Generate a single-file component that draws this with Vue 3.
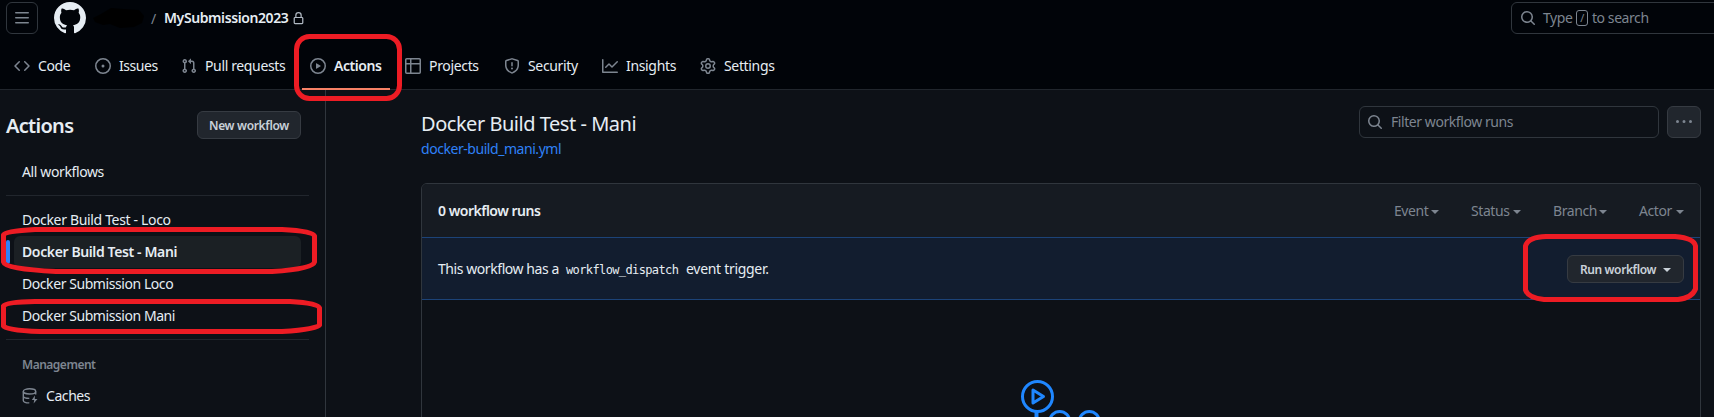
<script setup>
const tabs = [
  { name: 'Code', icon: 'code' },
  { name: 'Issues', icon: 'issue' },
  { name: 'Pull requests', icon: 'pull' },
  { name: 'Actions', icon: 'play', active: true },
  { name: 'Projects', icon: 'table' },
  { name: 'Security', icon: 'shield' },
  { name: 'Insights', icon: 'graph' },
  { name: 'Settings', icon: 'gear' }
]
const icons = {
  code: 'm11.28 3.22 4.25 4.25a.75.75 0 0 1 0 1.06l-4.25 4.25a.749.749 0 0 1-1.275-.326.749.749 0 0 1 .215-.734L13.94 8l-3.72-3.72a.749.749 0 0 1 .326-1.275.749.749 0 0 1 .734.215Zm-6.56 0a.751.751 0 0 1 1.042.018.751.751 0 0 1 .018 1.042L2.06 8l3.72 3.72a.749.749 0 0 1-.326 1.275.749.749 0 0 1-.734-.215L.47 8.53a.75.75 0 0 1 0-1.06Z',
  issue: 'M8 9.5a1.5 1.5 0 1 0 0-3 1.5 1.5 0 0 0 0 3Z M8 0a8 8 0 1 1 0 16A8 8 0 0 1 8 0ZM1.5 8a6.5 6.5 0 1 0 13 0 6.5 6.5 0 0 0-13 0Z',
  pull: 'M1.5 3.25a2.25 2.25 0 1 1 3 2.122v5.256a2.251 2.251 0 1 1-1.5 0V5.372A2.25 2.25 0 0 1 1.5 3.25Zm5.677-.177L9.573.677A.25.25 0 0 1 10 .854V2.5h1A2.5 2.5 0 0 1 13.5 5v5.628a2.251 2.251 0 1 1-1.5 0V5a1 1 0 0 0-1-1h-1v1.646a.25.25 0 0 1-.427.177L7.177 3.427a.25.25 0 0 1 0-.354ZM3.75 2.5a.75.75 0 1 0 0 1.5.75.75 0 0 0 0-1.5Zm0 9.5a.75.75 0 1 0 0 1.5.75.75 0 0 0 0-1.5Zm8.25.75a.75.75 0 1 0 1.5 0 .75.75 0 0 0-1.5 0Z',
  play: 'M8 0a8 8 0 1 1 0 16A8 8 0 0 1 8 0ZM1.5 8a6.5 6.5 0 1 0 13 0 6.5 6.5 0 0 0-13 0Zm4.879-2.773 4.264 2.559a.25.25 0 0 1 0 .428l-4.264 2.559A.25.25 0 0 1 6 10.559V5.442a.25.25 0 0 1 .379-.215Z',
  table: 'M0 1.75C0 .784.784 0 1.75 0h12.5C15.216 0 16 .784 16 1.75v12.5A1.75 1.75 0 0 1 14.25 16H1.75A1.75 1.75 0 0 1 0 14.25ZM6.5 6.5v8h7.75a.25.25 0 0 0 .25-.25V6.5Zm8-1.5V1.75a.25.25 0 0 0-.25-.25H6.5V5Zm-13 1.5v7.75c0 .138.112.25.25.25H5v-8ZM5 5V1.5H1.75a.25.25 0 0 0-.25.25V5Z',
  shield: 'M7.467.133a1.748 1.748 0 0 1 1.066 0l5.25 1.68A1.75 1.75 0 0 1 15 3.48V7c0 1.566-.32 3.182-1.303 4.682-.983 1.498-2.585 2.813-5.032 3.855a1.697 1.697 0 0 1-1.33 0c-2.447-1.042-4.049-2.357-5.032-3.855C1.32 10.182 1 8.566 1 7V3.48a1.75 1.75 0 0 1 1.217-1.667Zm.61 1.429a.25.25 0 0 0-.153 0l-5.25 1.68a.25.25 0 0 0-.174.238V7c0 1.358.275 2.666 1.057 3.86.784 1.194 2.121 2.34 4.366 3.297a.196.196 0 0 0 .154 0c2.245-.956 3.582-2.104 4.366-3.298C13.225 9.666 13.5 8.36 13.5 7V3.48a.251.251 0 0 0-.174-.237l-5.25-1.68ZM8.75 4.75v3a.75.75 0 0 1-1.5 0v-3a.75.75 0 0 1 1.5 0ZM9 10.5a1 1 0 1 1-2 0 1 1 0 0 1 2 0Z',
  graph: 'M1.5 1.75V13.5h13.75a.75.75 0 0 1 0 1.5H.75a.75.75 0 0 1-.75-.75V1.75a.75.75 0 0 1 1.5 0Zm14.28 2.53-5.25 5.25a.75.75 0 0 1-1.06 0L7 7.06 4.28 9.78a.751.751 0 0 1-1.042-.018.751.751 0 0 1-.018-1.042l3.25-3.25a.75.75 0 0 1 1.06 0L10 7.94l4.72-4.72a.751.751 0 0 1 1.042.018.751.751 0 0 1 .018 1.042Z',
  gear: 'M8 0a8.2 8.2 0 0 1 .701.031C9.444.095 9.99.645 10.16 1.29l.288 1.107c.018.066.079.158.212.224.231.114.454.243.668.386.123.082.233.09.299.071l1.103-.303c.644-.176 1.392.021 1.82.63.27.385.506.792.704 1.218.315.675.111 1.422-.364 1.891l-.814.806c-.049.048-.098.147-.088.294.016.257.016.515 0 .772-.01.147.038.246.088.294l.814.806c.475.469.679 1.216.364 1.891a7.977 7.977 0 0 1-.704 1.217c-.428.61-1.176.807-1.82.63l-1.102-.302c-.067-.019-.177-.011-.3.071a5.909 5.909 0 0 1-.668.386c-.133.066-.194.158-.211.224l-.29 1.106c-.168.646-.715 1.196-1.458 1.26a8.006 8.006 0 0 1-1.402 0c-.743-.064-1.289-.614-1.458-1.26l-.289-1.106c-.018-.066-.079-.158-.212-.224a5.738 5.738 0 0 1-.668-.386c-.123-.082-.233-.09-.299-.071l-1.103.303c-.644.176-1.392-.021-1.82-.63a8.12 8.12 0 0 1-.704-1.218c-.315-.675-.111-1.422.363-1.891l.815-.806c.05-.048.098-.147.088-.294a6.214 6.214 0 0 1 0-.772c.01-.147-.038-.246-.088-.294l-.815-.806C.635 6.045.431 5.298.746 4.623a7.92 7.92 0 0 1 .704-1.217c.428-.61 1.176-.807 1.82-.63l1.102.302c.067.019.177.011.3-.071.214-.143.437-.272.668-.386.133-.066.194-.158.211-.224l.29-1.106C6.009.645 6.556.095 7.299.03 7.53.01 7.764 0 8 0Zm-.571 1.525c-.036.003-.108.036-.137.146l-.289 1.105c-.147.561-.549.967-.998 1.189-.173.086-.34.183-.5.29-.417.278-.97.423-1.529.27l-1.103-.303c-.109-.03-.175.016-.195.045-.22.312-.412.644-.573.99-.014.031-.021.11.059.19l.815.806c.411.406.562.957.53 1.456a4.709 4.709 0 0 0 0 .582c.032.499-.119 1.05-.53 1.456l-.815.806c-.081.08-.073.159-.059.19.162.346.353.677.573.989.02.03.085.076.195.046l1.102-.303c.56-.153 1.113-.008 1.53.27.161.107.328.204.501.29.447.222.85.629.997 1.189l.289 1.105c.029.109.101.143.137.146a6.6 6.6 0 0 0 1.142 0c.036-.003.108-.036.137-.146l.289-1.105c.147-.561.549-.967.998-1.189.173-.086.34-.183.5-.29.417-.278.97-.423 1.529-.27l1.103.303c.109.029.175-.016.195-.045.22-.313.411-.644.573-.99.014-.031.021-.11-.059-.19l-.815-.806c-.411-.406-.562-.957-.53-1.456a4.709 4.709 0 0 0 0-.582c-.032-.499.119-1.05.53-1.456l.815-.806c.081-.08.073-.159.059-.19a6.464 6.464 0 0 0-.573-.989c-.02-.03-.085-.076-.195-.046l-1.102.303c-.56.153-1.113.008-1.53-.27a4.44 4.44 0 0 0-.501-.29c-.447-.222-.85-.629-.997-1.189l-.289-1.105c-.029-.11-.101-.143-.137-.146a6.6 6.6 0 0 0-1.142 0ZM11 8a3 3 0 1 1-6 0 3 3 0 0 1 6 0ZM9.5 8a1.5 1.5 0 1 0-3.001.001A1.5 1.5 0 0 0 9.5 8Z',
  search: 'M10.68 11.74a6 6 0 0 1-7.922-8.982 6 6 0 0 1 8.982 7.922l3.04 3.04a.749.749 0 0 1-.326 1.275.749.749 0 0 1-.734-.215ZM11.5 7a4.499 4.499 0 1 0-8.997 0A4.499 4.499 0 0 0 11.5 7Z',
  lock: 'M4 4a4 4 0 0 1 8 0v2h.25c.966 0 1.75.784 1.75 1.75v5.5A1.75 1.75 0 0 1 12.25 15h-8.5A1.75 1.75 0 0 1 2 13.25v-5.5C2 6.784 2.784 6 3.75 6H4Zm8.25 3.5h-8.5a.25.25 0 0 0-.25.25v5.5c0 .138.112.25.25.25h8.5a.25.25 0 0 0 .25-.25v-5.5a.25.25 0 0 0-.25-.25ZM10.5 6V4a2.5 2.5 0 1 0-5 0v2Z',
  menu: 'M1 2.75A.75.75 0 0 1 1.75 2h12.5a.75.75 0 0 1 0 1.5H1.75A.75.75 0 0 1 1 2.75Zm0 5A.75.75 0 0 1 1.75 7h12.5a.75.75 0 0 1 0 1.5H1.75A.75.75 0 0 1 1 7.75ZM1.75 12h12.5a.75.75 0 0 1 0 1.5H1.75a.75.75 0 0 1 0-1.5Z',
  dots: 'M8 9a1.5 1.5 0 1 0 0-3 1.5 1.5 0 0 0 0 3ZM1.5 9a1.5 1.5 0 1 0 0-3 1.5 1.5 0 0 0 0 3Zm13 0a1.5 1.5 0 1 0 0-3 1.5 1.5 0 0 0 0 3Z',
  mark: 'M8 0c4.42 0 8 3.58 8 8a8.013 8.013 0 0 1-5.45 7.59c-.4.08-.55-.17-.55-.38 0-.27.01-1.13.01-2.2 0-.75-.25-1.23-.54-1.48 1.78-.2 3.65-.88 3.65-3.95 0-.88-.31-1.59-.82-2.15.08-.2.36-1.02-.08-2.12 0 0-.67-.22-2.2.82-.64-.18-1.32-.27-2-.27-.68 0-1.36.09-2 .27-1.53-1.03-2.2-.82-2.2-.82-.44 1.1-.16 1.92-.08 2.12-.51.56-.82 1.28-.82 2.15 0 3.06 1.86 3.75 3.64 3.95-.23.2-.44.55-.51 1.07-.46.21-1.61.55-2.33-.66-.15-.24-.6-.83-1.23-.82-.67.01-.27.38.01.53.34.19.73.9.82 1.13.16.45.68 1.31 2.69.94 0 .67.01 1.3.01 1.49 0 .21-.15.45-.55.38A7.995 7.995 0 0 1 0 8c0-4.42 3.58-8 8-8Z'
}
const workflows = [
  { name: 'Docker Build Test - Loco', cls: 'w-a' },
  { name: 'Docker Build Test - Mani', cls: 'w-b', active: true },
  { name: 'Docker Submission Loco', cls: 'w-c' },
  { name: 'Docker Submission Mani', cls: 'w-d' }
]
const filters = ['Event', 'Status', 'Branch', 'Actor']
</script>

<template>
  <div class="page">
    <header class="header">
      <div class="topbar">
        <button class="menu"><svg class="ic" viewBox="0 0 16 16"><path :d="icons.menu" /></svg></button>
        <svg class="mark" viewBox="0 0 16 16"><path :d="icons.mark" /></svg>
        <svg class="redacted" viewBox="0 0 52 24"><path d="M0 12 8 8l5-3 5-3 12 1 16 1 5 6-2 7-8 4-14 1-10-4-7 1-8-3Z" /></svg>
        <span class="slash">/</span>
        <b class="repo">MySubmission2023</b>
        <svg class="lock" viewBox="0 0 16 16"><path :d="icons.lock" /></svg>
        <div class="search">
          <svg class="ic" viewBox="0 0 16 16"><path :d="icons.search" /></svg>
          <span class="type">Type</span><kbd>/</kbd><span>to search</span>
        </div>
      </div>
      <nav class="tabs">
        <a v-for="t in tabs" :key="t.name" class="tab" :class="[t.icon, { active: t.active }]">
          <svg class="ic" viewBox="0 0 16 16"><path :d="icons[t.icon]" fill-rule="evenodd" /></svg>
          <span>{{ t.name }}</span>
        </a>
      </nav>
    </header>

    <div class="body">
      <aside class="side">
        <div class="side-head">
          <h2>Actions</h2>
          <button class="btn new">New workflow</button>
        </div>
        <a class="item all">All workflows</a>
        <hr class="hr-a">
        <a v-for="w in workflows" :key="w.name" class="item" :class="[w.cls, { active: w.active }]">{{ w.name }}</a>
        <hr class="hr-b">
        <div class="mgmt">Management</div>
        <a class="item caches">
          <svg class="db" viewBox="0 0 16 16">
            <ellipse cx="7.5" cy="3.4" rx="6.2" ry="2.6" />
            <path d="M1.3 3.4v9c0 1.2 2.2 2.4 6 2.500M1.3 8c0 1.3 2.4 2.4 6 2.400M13.700 3.400v3" />
            <path class="bolt" d="M12.900 7.600 9.800 12h2.400l-.6 3.600L15.500 11h-2.700Z" />
          </svg>
          <span>Caches</span>
        </a>
      </aside>

      <main class="main">
        <div class="title-row">
          <div class="titles">
            <h1>Docker Build Test - Mani</h1>
            <a class="file">docker-build_mani.yml</a>
          </div>
          <div class="filter">
            <svg class="ic" viewBox="0 0 16 16"><path :d="icons.search" /></svg>
            <span>Filter workflow runs</span>
          </div>
          <button class="btn more"><svg class="ic" viewBox="0 0 16 16"><path :d="icons.dots" /></svg></button>
        </div>
        <section class="card">
          <div class="card-head">
            <b>0 workflow runs</b>
            <div class="filters">
              <span v-for="f in filters" :key="f" :class="f.toLowerCase()">{{ f }}<i class="caret"></i></span>
            </div>
          </div>
          <div class="dispatch">
            <p><span class="p-a">This workflow has a</span><code>workflow_dispatch</code><span class="p-b">event trigger.</span></p>
            <button class="btn run">Run workflow<i class="caret"></i></button>
          </div>
          <div class="empty">
            <svg class="art" viewBox="0 0 90 38">
              <circle cx="17.5" cy="16.5" r="15" />
              <path d="M13 10v13l10.500-6.500Z" stroke-linejoin="round" />
              <path d="M16.500 32v6" stroke-width="4" />
              <circle cx="39.700" cy="41.500" r="10" />
              <circle cx="69.300" cy="41.500" r="10" />
            </svg>
          </div>
        </section>
      </main>
    </div>

    <svg class="marks" viewBox="0 0 1714 417">
      <rect x="296.500" y="36.500" width="103" height="62" rx="13" />
      <path d="M3.500 235Q5 231 35 229.500H282Q313 231 314.500 236V262Q313 269 272 271.500H56Q5 269 3.500 262Z" />
      <path d="M3.500 306Q6 302 35 301.500H290Q318 303 319.500 308V325Q318 329 282 331.500H40Q5 330 3.500 326Z" />
      <path d="M1525.500 246Q1528 237 1546 236.500H1675Q1694 238 1695.500 246V289Q1692 298 1678 299.500H1544Q1528 298 1525.500 290Z" />
    </svg>
  </div>
</template>

<style>
html, body { background: #0d1117; overflow: hidden; }
</style>

<style scoped>
* { box-sizing: border-box; }
.page { position: relative; width: 1714px; height: 417px; overflow: hidden; background: #0d1117; color: #e6edf3; font: 14px/20px "Noto Sans", "Open Sans", sans-serif; letter-spacing: -.43px; white-space: nowrap; }
svg { display: block; flex: none; }
button { font: inherit; letter-spacing: inherit; padding: 0; }
.ic { width: 16px; height: 16px; fill: #7d8590; }
.header { height: 90px; background: #010409; border-bottom: 1px solid #21262d; }
.topbar { display: flex; align-items: center; height: 36px; padding: 0 0 0 6px; }
.menu { display: grid; place-items: center; width: 32px; height: 32px; border: 1px solid #30363d; border-radius: 6px; background: none; }
.mark { width: 32px; height: 32px; margin-left: 16px; fill: #e6edf3; }
.redacted { width: 52px; height: 24px; margin-left: 7px; fill: #000; }
.slash { width: 6px; margin-left: 6px; padding-top: 1px; color: #7d8590; }
.repo { width: 124px; margin-left: 7px; font-weight: 600; letter-spacing: -.4px; }
.lock { width: 13px; height: 13px; margin-left: 4px; fill: #b1bac4; }
.search { display: flex; align-items: center; width: 230px; height: 32px; margin-left: auto; margin-right: -27px; padding-left: 8px; border: 1px solid #30363d; border-radius: 6px; color: #7d8590; }
.type { margin-left: 7px; width: 33px; }
kbd { display: grid; place-items: center; width: 12px; height: 16px; margin-right: 4px; border: 1px solid #7d8590; border-radius: 3px; font: 11px/12px "Noto Sans", sans-serif; }
.tabs { display: flex; gap: 8px; height: 54px; padding-left: 6px; }
.tab { display: flex; align-items: center; gap: 8px; height: 54px; padding: 8px 0 0 8px; border-bottom: 2px solid transparent; }
.tab.code { width: 73px; } .tab.issue { width: 78px; } .tab.pull { width: 121px; letter-spacing: -.36px; }
.tab.play { width: 88px; font-weight: 600; } .tab.active { border-color: #f78166; }
.tab.table { width: 91px; margin-left: -1px; } .tab.shield { width: 90px; } .tab.graph { width: 90px; }
.tab.table, .tab.shield, .tab.graph, .tab.gear { letter-spacing: -.34px; }
.body { display: flex; height: 327px; }
.side { width: 326px; padding: 21px 0 0 6px; border-right: 1px solid #30363d; }
.side-head { display: flex; align-items: center; justify-content: space-between; height: 28px; margin-right: 24px; }
h2 { margin: 2px 0 0; font-size: 20px; line-height: 28px; font-weight: 600; letter-spacing: -.7px; }
.btn { display: flex; align-items: center; justify-content: center; border: 1px solid #363b42; border-radius: 6px; background: #21262d; color: #c9d1d9; font-size: 12px; font-weight: 600; }
.new { width: 104px; height: 28px; padding-top: 2px; letter-spacing: -.33px; }
.item { position: relative; display: flex; align-items: center; height: 32px; width: 287px; margin-left: 8px; padding-left: 8px; border-radius: 6px; }
.all { margin-top: 17px; letter-spacing: -.38px; }
.w-a { letter-spacing: -.33px; }
.w-b { letter-spacing: -.38px; }
hr { width: 303px; height: 1px; margin: 0; border: 0; background: #21262d; }
.hr-a { margin: 7px 0 8px; } .hr-b { margin: 7px 0 15px; }
.item.active { background: #1b2024; font-weight: 600; }
.item.active::before { content: ""; position: absolute; left: -8px; top: 4px; width: 4px; height: 24px; border-radius: 6px; background: #2f81f7; }
.mgmt { margin-left: 16px; font-size: 12px; font-weight: 600; color: #7d8590; line-height: 20px; letter-spacing: -.5px; }
.caches { gap: 8px; margin-top: 5px; }
.db { width: 16px; height: 16px; fill: none; stroke: #7d8590; stroke-width: 1.4; }
.bolt { fill: #7d8590; stroke: none; }
.main { flex: 1; padding: 16px 13px 0 95px; }
.title-row { display: flex; height: 77px; }
.titles { flex: 1; }
h1 { margin: 3px 0 0; font-size: 20px; line-height: 30px; font-weight: 400; letter-spacing: -.47px; }
.file { display: block; color: #2f81f7; line-height: 20px; letter-spacing: -.45px; }
.filter { display: flex; align-items: center; width: 300px; height: 32px; margin-right: 8px; padding-left: 7px; gap: 8px; border: 1px solid #30363d; border-radius: 6px; color: #7d8590; }
.more { width: 34px; height: 32px; }
.card { height: 260px; border: 1px solid #30363d; border-radius: 6px 6px 0 0; overflow: hidden; }
.card-head { display: flex; justify-content: space-between; align-items: center; height: 53px; padding: 0 16px; background: #161b22; }
.card-head b { font-weight: 600; letter-spacing: -.5px; }
.filters { display: flex; color: #7d8590; }
.filters span { display: flex; align-items: center; justify-content: space-between; }
.event { width: 45px; } .status { width: 50px; margin-left: 32px; } .branch { width: 54px; margin-left: 32px; } .actor { width: 45px; margin-left: 32px; }
.caret { width: 0; height: 0; margin-top: 2px; border: 4px solid transparent; border-top-color: currentColor; border-bottom: 0; }
.dispatch { display: flex; justify-content: space-between; align-items: center; height: 63px; padding: 0 16px; background: #121d2f; border: solid #1c4378; border-width: 1px 0; }
.dispatch p { display: flex; align-items: center; margin: 1px 0 0; }
.p-a { width: 121px; }
code { width: 127px; padding: 1px 0 0 7px; font: 12px/18px "DejaVu Sans Mono", monospace; letter-spacing: -.62px; }
.p-b { letter-spacing: -.3px; }
.run { width: 117px; height: 28px; gap: 7px; padding-top: 2px; letter-spacing: -.4px; }
.run .caret { margin-top: 1px; }
.empty { display: flex; justify-content: center; padding: 80px 0 0 8px; }
.art { width: 90px; height: 38px; fill: none; stroke: #1f87ff; stroke-width: 3; }
.marks { position: absolute; left: 0; top: 0; width: 1714px; height: 417px; pointer-events: none; fill: none; stroke: #ed1c24; stroke-width: 5; }
</style>
